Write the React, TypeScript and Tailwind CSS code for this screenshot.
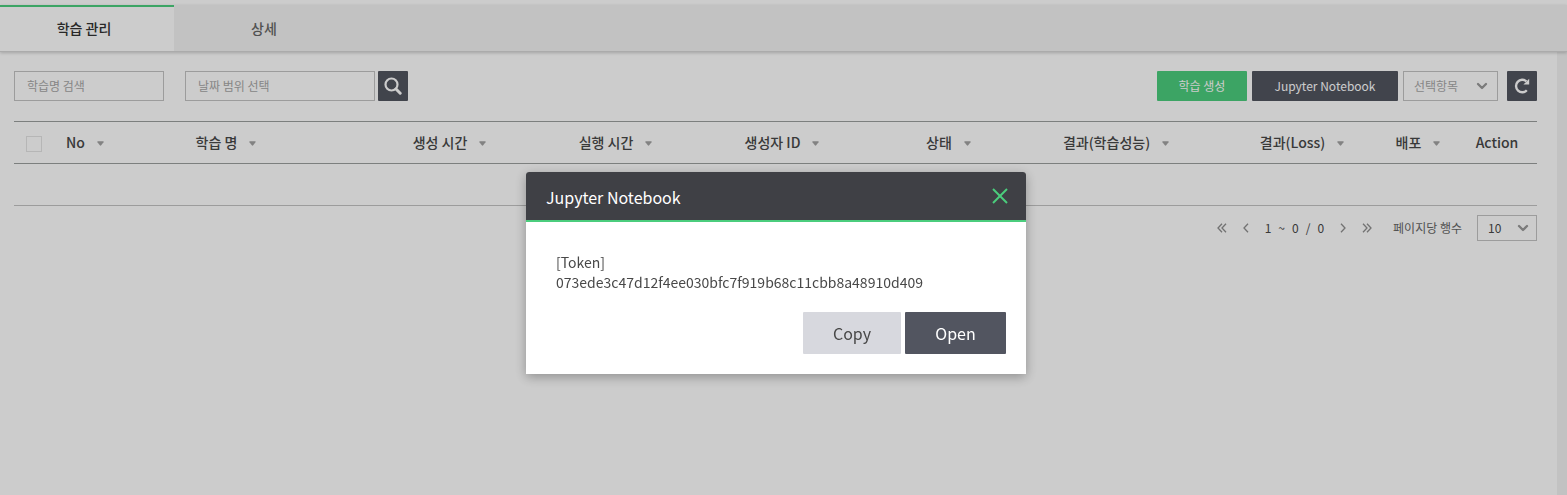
import { ChevronDown, X } from "lucide-react";

type Column = { label: string; width: string; sortable: boolean };

const columns: Column[] = [
  { label: "No", width: "w-[50px]", sortable: true },
  { label: "학습 명", width: "w-[232px]", sortable: true },
  { label: "생성 시간", width: "w-[215px]", sortable: true },
  { label: "실행 시간", width: "w-[117px]", sortable: true },
  { label: "생성자 ID", width: "w-[216px]", sortable: true },
  { label: "상태", width: "w-[117px]", sortable: true },
  { label: "결과(학습성능)", width: "w-[218px]", sortable: true },
  { label: "결과(Loss)", width: "w-[154px]", sortable: true },
  { label: "배포", width: "w-[78px]", sortable: true },
  { label: "Action", width: "w-[80px]", sortable: false },
];

function SortArrow() {
  return (
    <svg viewBox="0 0 7 5" className="mt-1 h-[5px] w-[7px] shrink-0 fill-[#a3a3a3]" aria-hidden="true">
      <path d="M0.8 0.2H6.2Q7 0.4 6.5 1.2L4.2 4.3Q3.5 5 2.8 4.3L0.5 1.2Q0 0.4 0.8 0.2Z" />
    </svg>
  );
}

function SearchIcon() {
  return (
    <svg viewBox="0 0 18 18" className="h-[18px] w-[18px]" fill="none" stroke="#fff" aria-hidden="true">
      <circle cx="7.5" cy="7.5" r="6" strokeWidth="2.2" />
      <path d="M12 12L16.2 16.2" strokeWidth="3" strokeLinecap="round" />
    </svg>
  );
}

function RefreshIcon() {
  return (
    <svg viewBox="0 0 16 16" className="h-4 w-4" aria-hidden="true">
      <path d="M12.8 12.2A6.2 6.2 0 1 1 12.4 3.4" fill="none" stroke="#fff" strokeWidth="2.4" />
      <path d="M15.2 0.8V6.6H9.4Z" fill="#fff" />
    </svg>
  );
}

const singleChevron = "M5 0.8L1 5L5 9.2";
const doubleChevron = "M5 0.8L1 5L5 9.2M9 0.8L5 5L9 9.2";

function PageArrow({ label, double, forward }: { label: string; double?: boolean; forward?: boolean }) {
  return (
    <button type="button" aria-label={label}>
      <svg
        viewBox={double ? "0 0 10 10" : "0 0 6 10"}
        className={`block h-2.5 ${double ? "w-2.5" : "w-1.5"} ${forward ? "rotate-180" : ""}`}
        fill="none"
        stroke="currentColor"
        strokeWidth="1.3"
        aria-hidden="true"
      >
        <path d={double ? doubleChevron : singleChevron} />
      </svg>
    </button>
  );
}

function Tabs() {
  return (
    <nav className="relative flex h-[47px] border-b border-[#d6d6d6] bg-[#f3f3f3] text-sm font-medium shadow-[0_1px_3px_rgba(0,0,0,0.2)]">
      <button type="button" className="w-[174px] border-t-2 border-[#4bcd7d] bg-white pr-1.5 pb-0.5 text-[#333]">
        학습 관리
      </button>
      <button type="button" className="w-[180px] text-[#666]">
        상세
      </button>
    </nav>
  );
}

function Toolbar() {
  return (
    <div className="flex h-[30px] items-stretch text-xs">
      <input
        type="text"
        aria-label="학습명 검색"
        placeholder="학습명 검색"
        className="w-[150px] border border-[#c4c4c4] bg-white px-3 placeholder:text-[#a8a8a8]"
      />
      <input
        type="text"
        aria-label="날짜 범위 선택"
        placeholder="날짜 범위 선택"
        className="ml-[21px] w-[190px] border border-[#c4c4c4] bg-white px-3 placeholder:text-[#a8a8a8]"
      />
      <button
        type="button"
        aria-label="검색"
        className="ml-[3px] flex w-[30px] items-center justify-center rounded-[1px] bg-[#525560]"
      >
        <SearchIcon />
      </button>
      <button type="button" className="ml-auto w-[90px] rounded-[1px] bg-[#4bcd7d] text-white">
        학습 생성
      </button>
      <button type="button" className="ml-[5px] w-[146px] rounded-[1px] bg-[#525560] text-white">
        Jupyter Notebook
      </button>
      <div className="relative ml-[5px] flex">
        <select
          aria-label="선택항목"
          className="w-[95px] appearance-none border border-[#c4c4c4] bg-white px-2.5 text-[#a8a8a8]"
        >
          <option>선택항목</option>
        </select>
        <ChevronDown
          size={16}
          strokeWidth={3.5}
          className="pointer-events-none absolute top-[7px] right-2 text-[#9a9a9a]"
        />
      </div>
      <button
        type="button"
        aria-label="새로고침"
        className="ml-[9px] flex w-[30px] items-center justify-center rounded-[1px] bg-[#525560]"
      >
        <RefreshIcon />
      </button>
    </div>
  );
}

function TrainingTable() {
  return (
    <table className="mt-5 w-full table-fixed border-collapse text-sm">
      <thead>
        <tr className="h-[42px] border-y border-[#9c9f9e]">
          <th className="w-[46px] py-0 pl-3 text-left">
            <input
              type="checkbox"
              aria-label="전체 선택"
              className="mt-[3px] block h-4 w-4 appearance-none border border-[#e4e4e4]"
            />
          </th>
          {columns.map((column) => (
            <th key={column.label} scope="col" className={`${column.width} p-0 pb-0.5 font-medium text-[#484848]`}>
              {column.sortable ? (
                <button type="button" className="mx-auto flex items-center gap-3 whitespace-nowrap">
                  {column.label}
                  <SortArrow />
                </button>
              ) : (
                column.label
              )}
            </th>
          ))}
        </tr>
      </thead>
      <tbody>
        <tr className="h-[42px] border-b border-[#c4c4c4]">
          <td colSpan={11} />
        </tr>
      </tbody>
    </table>
  );
}

function Pagination() {
  return (
    <div className="mt-[9px] flex h-[26px] items-center justify-end text-xs text-[#484848]">
      <div className="flex items-center gap-4 text-[#8f8f8f]">
        <PageArrow label="처음" double />
        <PageArrow label="이전" />
        <span className="flex gap-[7px] text-[#484848]">
          <span>1</span>
          <span>~</span>
          <span>0</span>
          <span>/</span>
          <span>0</span>
        </span>
        <PageArrow label="다음" forward />
        <PageArrow label="마지막" double forward />
      </div>
      <label htmlFor="page-size" className="ml-[21px] text-[#666]">
        페이지당 행수
      </label>
      <div className="relative ml-[15px] flex h-full">
        <select
          id="page-size"
          className="w-[60px] appearance-none border border-[#c4c4c4] bg-white px-2.5 text-[#484848]"
        >
          <option>10</option>
        </select>
        <ChevronDown
          size={16}
          strokeWidth={3.5}
          className="pointer-events-none absolute top-[5px] right-1.5 text-[#9a9a9a]"
        />
      </div>
    </div>
  );
}

function TokenDialog() {
  return (
    <div
      role="dialog"
      aria-modal="true"
      aria-labelledby="dialog-title"
      className="w-[500px] rounded-t-[3px] bg-white shadow-[0_3px_12px_rgba(0,0,0,0.3)]"
    >
      <header className="flex h-[50px] items-center justify-between rounded-t-[3px] border-b-2 border-[#4bcd7d] bg-[#3f4045] pr-3 pl-5">
        <h2 id="dialog-title" className="pt-0.5 text-base text-white">
          Jupyter Notebook
        </h2>
        <button type="button" aria-label="닫기" className="text-[#4bcd7d]">
          <X size={28} strokeWidth={2} absoluteStrokeWidth strokeLinecap="butt" />
        </button>
      </header>
      <div className="px-5 pt-[30px] pb-5">
        <p className="px-2.5 text-sm leading-5 text-[#484848]">
          [Token]
          <br />
          073ede3c47d12f4ee030bfc7f919b68c11cbb8a48910d409
        </p>
        <div className="mt-5 flex h-[42px] justify-end gap-1">
          <button type="button" className="w-[98px] rounded-[1px] bg-[#d7d8de] text-base text-[#484848]">
            Copy
          </button>
          <button type="button" className="w-[101px] rounded-[1px] bg-[#525560] text-base text-white">
            Open
          </button>
        </div>
      </div>
    </div>
  );
}

export default function App() {
  return (
    <div className="flex min-h-screen flex-col bg-white pt-[5px] font-['Noto_Sans_CJK_KR',sans-serif]">
      <Tabs />
      <div className="flex flex-1 bg-[#f3f3f3] pr-2.5">
        <main className="flex-1 bg-white pt-[19px] pr-5 pl-3.5">
          <Toolbar />
          <TrainingTable />
          <Pagination />
        </main>
      </div>
      <div className="fixed inset-0 flex items-start justify-center bg-black/20 pt-[172px] pr-[15px]">
        <TokenDialog />
      </div>
    </div>
  );
}
